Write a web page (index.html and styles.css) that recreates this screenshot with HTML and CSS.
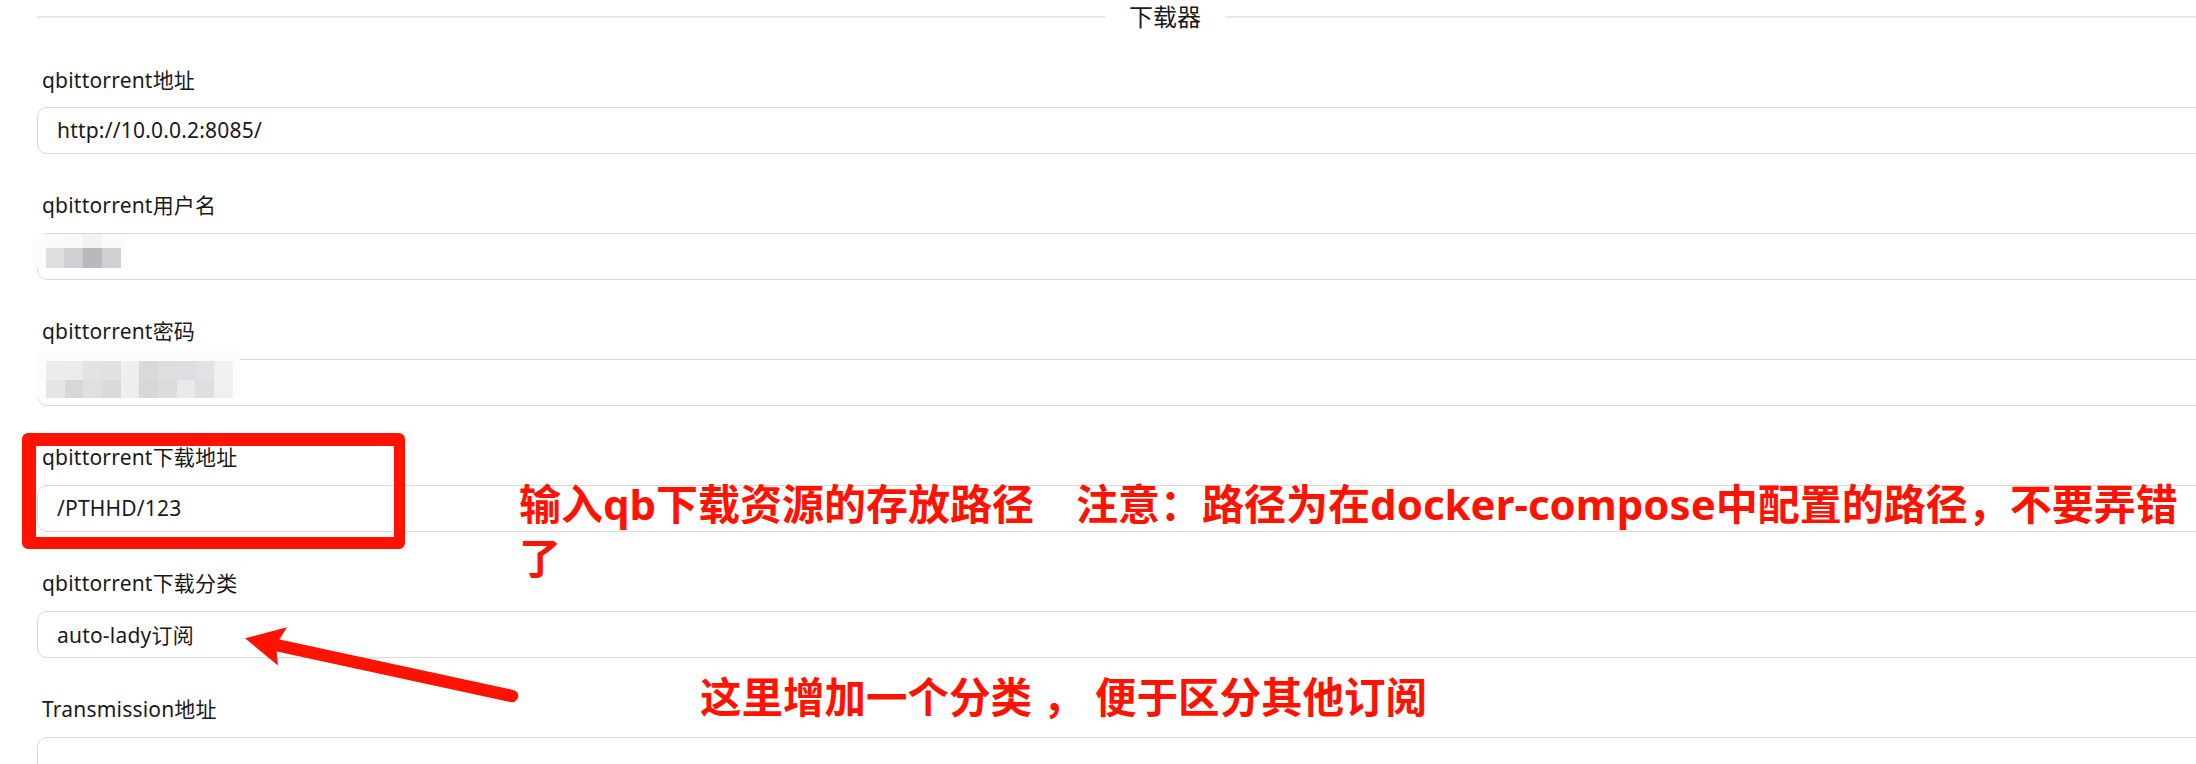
FILE: index.html
```html
<!DOCTYPE html>
<html lang="zh-CN">
<head>
<meta charset="utf-8">
<title>下载器</title>
<link rel="stylesheet" href="styles.css">
</head>
<body>
<div class="page">
  <div class="form">
    <div class="divider">
      <span class="divider-line"></span>
      <span class="divider-text">下载器</span>
      <span class="divider-line"></span>
    </div>
    <div class="fields">
      <div class="field">
        <label class="label">qbittorrent地址</label>
        <div class="control"><input class="input" value="http://10.0.0.2:8085/"></div>
      </div>
      <div class="field">
        <label class="label">qbittorrent用户名</label>
        <div class="control">
          <input class="input" value="">
          <div class="mosaic mosaic-user">
            <span></span><span></span><span></span><span></span><span></span><span></span>
            <span></span><span></span><span></span><span></span><span></span><span></span>
          </div>
        </div>
      </div>
      <div class="field">
        <label class="label">qbittorrent密码</label>
        <div class="control">
          <input class="input" type="text" value="">
          <div class="mosaic mosaic-pass">
            <span></span><span></span><span></span><span></span><span></span><span></span><span></span><span></span><span></span><span></span><span></span><span></span>
            <span></span><span></span><span></span><span></span><span></span><span></span><span></span><span></span><span></span><span></span><span></span><span></span>
            <span></span><span></span><span></span><span></span><span></span><span></span><span></span><span></span><span></span><span></span><span></span><span></span>
          </div>
        </div>
      </div>
      <div class="field">
        <label class="label">qbittorrent下载地址</label>
        <div class="control"><input class="input" value="/PTHHD/123"></div>
      </div>
      <div class="field">
        <label class="label">qbittorrent下载分类</label>
        <div class="control"><input class="input" value="auto-lady订阅"></div>
      </div>
      <div class="field">
        <label class="label">Transmission地址</label>
        <div class="control"><input class="input" value=""></div>
      </div>
    </div>
  </div>

  <div class="mark-box"></div>
  <div class="note note-path">输入qb下载资源的存放路径　注意：路径为在docker-compose中配置的路径，不要弄错了</div>
  <div class="note note-cat">这里增加一个分类 ， 便于区分其他订阅</div>
  <svg class="arrow" width="2196" height="764" viewBox="0 0 2196 764" xmlns="http://www.w3.org/2000/svg">
    <line x1="276" y1="645" x2="512" y2="696" stroke="#ff1200" stroke-width="12.5" stroke-linecap="round"/>
    <polygon points="245,638.3 287,627.3 276,645 278,665.5" fill="#ff1200"/>
  </svg>
</div>
</body>
</html>
```

FILE: styles.css
```css
html, body {
  margin: 0;
  padding: 0;
  background: #ffffff;
}

body {
  font-family: "Noto Sans", "Noto Sans CJK SC", sans-serif;
  color: #1a1a1a;
  overflow: hidden;
}

.page {
  position: relative;
  width: 2196px;
  height: 764px;
  overflow: hidden;
  padding-left: 37px;
  box-sizing: border-box;
}

.form {
  width: 2256px;
}

.divider {
  display: flex;
  align-items: center;
  height: 33px;
}

.divider-line {
  flex: 1;
  height: 2px;
  background: #e8e8e8;
}

.divider-text {
  padding: 0 24px;
  font-size: 24px;
  line-height: 33px;
  color: #1a1a1a;
}

.fields {
  padding-top: 32.5px;
}

.field {
  margin-bottom: 37.8px;
}

.label {
  display: block;
  height: 28px;
  line-height: 28px;
  font-size: 21px;
  letter-spacing: 0.2px;
  padding-left: 5px;
  margin-bottom: 13.2px;
  white-space: nowrap;
}

.control {
  position: relative;
}

.input {
  display: block;
  width: 100%;
  height: 47px;
  box-sizing: border-box;
  border: 1px solid #d9d9d9;
  border-radius: 10px;
  padding: 0 19px;
  font-family: "Noto Sans", "Noto Sans CJK SC", sans-serif;
  font-size: 21px;
  letter-spacing: 0.2px;
  color: #1a1a1a;
  background: #ffffff;
  outline: none;
}

/* redaction mosaics */
.mosaic {
  position: absolute;
  display: grid;
}

.mosaic span {
  background: #fcfcfc;
}

.mosaic-user {
  left: -3.7px;
  top: 1.6px;
  grid-template-columns: 12.7px 18.3px 18.7px 19px 19px 5.7px;
  grid-template-rows: 14px 20px;
}

.mosaic-user span:nth-child(2) { background: #fafafa; }
.mosaic-user span:nth-child(3) { background: #f9f9f9; }
.mosaic-user span:nth-child(4) { background: #f3f3f3; }
.mosaic-user span:nth-child(5) { background: #fafafa; }
.mosaic-user span:nth-child(8) { background: #dedede; }
.mosaic-user span:nth-child(9) { background: #cfcfd4; }
.mosaic-user span:nth-child(10) { background: #bab7bd; }
.mosaic-user span:nth-child(11) { background: #d0d0d5; }

.mosaic-pass {
  left: 0;
  top: -7.7px;
  grid-template-columns: 9px repeat(10, 18.67px) 7.3px;
  grid-template-rows: 10px 19px 18.3px;
}

.mosaic-pass span:nth-child(14) { background: #ececec; }
.mosaic-pass span:nth-child(15) { background: #ebebed; }
.mosaic-pass span:nth-child(16) { background: #e3e3e4; }
.mosaic-pass span:nth-child(17) { background: #e1e1e3; }
.mosaic-pass span:nth-child(18) { background: #efefef; }
.mosaic-pass span:nth-child(19) { background: #d9d9db; }
.mosaic-pass span:nth-child(20) { background: #dedee1; }
.mosaic-pass span:nth-child(21) { background: #dfdee2; }
.mosaic-pass span:nth-child(22) { background: #e2e2e5; }
.mosaic-pass span:nth-child(23) { background: #f0f0f2; }
.mosaic-pass span:nth-child(26) { background: #e6e6e6; }
.mosaic-pass span:nth-child(27) { background: #d7d7d9; }
.mosaic-pass span:nth-child(28) { background: #e0e0e2; }
.mosaic-pass span:nth-child(29) { background: #dbd9dc; }
.mosaic-pass span:nth-child(30) { background: #eeeef0; }
.mosaic-pass span:nth-child(31) { background: #d7d7d9; }
.mosaic-pass span:nth-child(32) { background: #dcdcdf; }
.mosaic-pass span:nth-child(33) { background: #e9e9ea; }
.mosaic-pass span:nth-child(34) { background: #dfdfe2; }
.mosaic-pass span:nth-child(35) { background: #f0f0f2; }

/* annotations drawn over the form */
.mark-box {
  position: absolute;
  left: 22px;
  top: 433px;
  width: 383px;
  height: 116px;
  box-sizing: border-box;
  border-style: solid;
  border-color: #ff1200;
  border-width: 13px 11px 12px 14px;
  border-radius: 6px;
}

.note {
  position: absolute;
  color: #ff1200;
  font-family: "Noto Sans", "Noto Sans CJK SC", sans-serif;
  font-weight: 700;
  font-size: 42px;
  line-height: 54px;
}

.note-path {
  left: 519px;
  top: 477px;
  width: 1677px;
}

.note-cat {
  left: 700px;
  top: 670px;
  font-size: 41.5px;
  white-space: nowrap;
}

.arrow {
  position: absolute;
  left: 0;
  top: 0;
  pointer-events: none;
}
```
